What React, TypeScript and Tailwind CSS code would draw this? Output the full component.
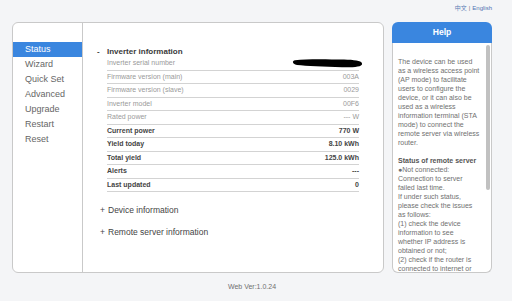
import React from "react";

const rows: { label: string; value: React.ReactNode; strong?: boolean }[] = [
  { label: "Inverter serial number", value: "scribble" },
  { label: "Firmware version (main)", value: "003A" },
  { label: "Firmware version (slave)", value: "0029" },
  { label: "Inverter model", value: "00F6" },
  { label: "Rated power", value: "--- W" },
  { label: "Current power", value: "770 W", strong: true },
  { label: "Yield today", value: "8.10 kWh", strong: true },
  { label: "Total yield", value: "125.0 kWh", strong: true },
  { label: "Alerts", value: "---", strong: true },
  { label: "Last updated", value: "0", strong: true },
];

const nav = ["Status", "Wizard", "Quick Set", "Advanced", "Upgrade", "Restart", "Reset"];

const helpLines: { t: string; b?: boolean }[] = [
  { t: "The device can be used" },
  { t: "as a wireless access point" },
  { t: "(AP mode) to facilitate" },
  { t: "users to configure the" },
  { t: "device, or it can also be" },
  { t: "used as a wireless" },
  { t: "information terminal (STA" },
  { t: "mode) to connect the" },
  { t: "remote server via wireless" },
  { t: "router." },
  { t: "" },
  { t: "Status of remote server", b: true },
  { t: "●Not connected:" },
  { t: "Connection to server" },
  { t: "failed last time." },
  { t: "If under such status," },
  { t: "please check the issues" },
  { t: "as follows:" },
  { t: "(1) check the device" },
  { t: "information to see" },
  { t: "whether IP address is" },
  { t: "obtained or not;" },
  { t: "(2) check if the router is" },
  { t: "connected to internet or" },
];

function Scribble() {
  return (
    <svg width="71" height="10" viewBox="0 0 71 10" className="-mr-[4px] mt-[1px] self-start">
      <path
        d="M3,2.2 C14,0.8 34,1 52,1.6 C62,2 69,2.6 70,5.4 C71,8.6 63,9.4 50,9.2 C32,8.8 14,8 5,7 C0.5,6.4 -0.5,2.8 3,2.2 Z"
        fill="#000"
      />
    </svg>
  );
}

export default function App() {
  return (
    <div className="w-[512px] h-[301px] bg-[#f4f5f7] overflow-hidden font-['Liberation_Sans',Arial,sans-serif]">
      <div className="ml-[12px] w-[480px]">
        <div className="h-[22px] flex justify-end items-start pt-[5px] pr-[0px]">
          <span className="text-[6px] leading-[6px] text-[#5b7db5] font-['Noto_Sans_CJK_SC',sans-serif]">中文</span>
          <span className="text-[6px] leading-[6px] text-[#777] mx-[2px]">|</span>
          <span className="text-[6px] leading-[6px] text-[#4f74b3]">English</span>
        </div>
        <div className="flex gap-[8px] h-[251px]">
          <div className="w-[372px] h-full bg-white border border-[#c9c9c9] rounded-[6px] flex overflow-hidden">
            <div className="w-[70px] h-full border-r border-[#c9c9c9] pt-[19px]">
              {nav.map((n, i) => (
                <div
                  key={n}
                  className={
                    i === 0
                      ? "h-[15px] leading-[15px] pl-[12px] text-[9px] text-white bg-[#3a86df]"
                      : "h-[15px] leading-[15px] pl-[12px] text-[9px] text-[#666]"
                  }
                >
                  {n}
                </div>
              ))}
            </div>
            <div className="flex-1 pl-[14px] pt-[24px]">
              <div className="flex h-[10px] leading-[10px] text-[8px] font-bold text-[#3a3a3a]">
                <span className="w-[10px]">-</span>
                <span>Inverter information</span>
              </div>
              <div className="ml-[10px] w-[252px]">
                {rows.map((r) => (
                  <div
                    key={r.label}
                    className="h-[13.5px] border-b border-[#d3d3d3] flex items-center justify-between text-[7px] leading-[12px]"
                  >
                    <span className={r.strong ? "font-bold text-[#444]" : "text-[#9a9a9a]"}>{r.label}</span>
                    {r.value === "scribble" ? (
                      <Scribble />
                    ) : (
                      <span className={r.strong ? "font-bold text-[#444]" : "text-[#9a9a9a]"}>{r.value}</span>
                    )}
                  </div>
                ))}
              </div>
              <div className="mt-[12px] flex h-[12px] leading-[12px] text-[8.5px] text-[#444]">
                <span className="ml-[3px] w-[8px]">+</span>
                <span>Device information</span>
              </div>
              <div className="mt-[10px] flex h-[12px] leading-[12px] text-[8.5px] text-[#444]">
                <span className="ml-[3px] w-[8px]">+</span>
                <span>Remote server information</span>
              </div>
            </div>
          </div>
          <div className="w-[100px] h-full flex flex-col">
            <div className="h-[21px] leading-[21px] bg-[#3a86df] rounded-t-[6px] text-center text-white font-bold text-[8.6px]">
              Help
            </div>
            <div className="flex-1 min-h-0 bg-white border border-t-0 border-[#c9c9c9] rounded-b-[6px] overflow-hidden flex">
              <div className="flex-1 pl-[5px] pt-[14px] overflow-hidden">
                {helpLines.map((l, i) => (
                  <div
                    key={i}
                    className={
                      l.b
                        ? "h-[9px] leading-[9px] text-[7px] whitespace-nowrap font-bold text-[#555]"
                        : "h-[9px] leading-[9px] text-[7px] whitespace-nowrap text-[#707070]"
                    }
                  >
                    {l.t}
                  </div>
                ))}
              </div>
              <div className="w-[6px] pr-[1px] pt-[2px] flex justify-end">
                <div className="w-[4px] h-[145px] rounded-full bg-[#c1c1c1]" />
              </div>
            </div>
          </div>
        </div>
        <div className="mt-[10px] text-center text-[7px] leading-[8px] text-[#707070]">Web Ver:1.0.24</div>
      </div>
    </div>
  );
}
